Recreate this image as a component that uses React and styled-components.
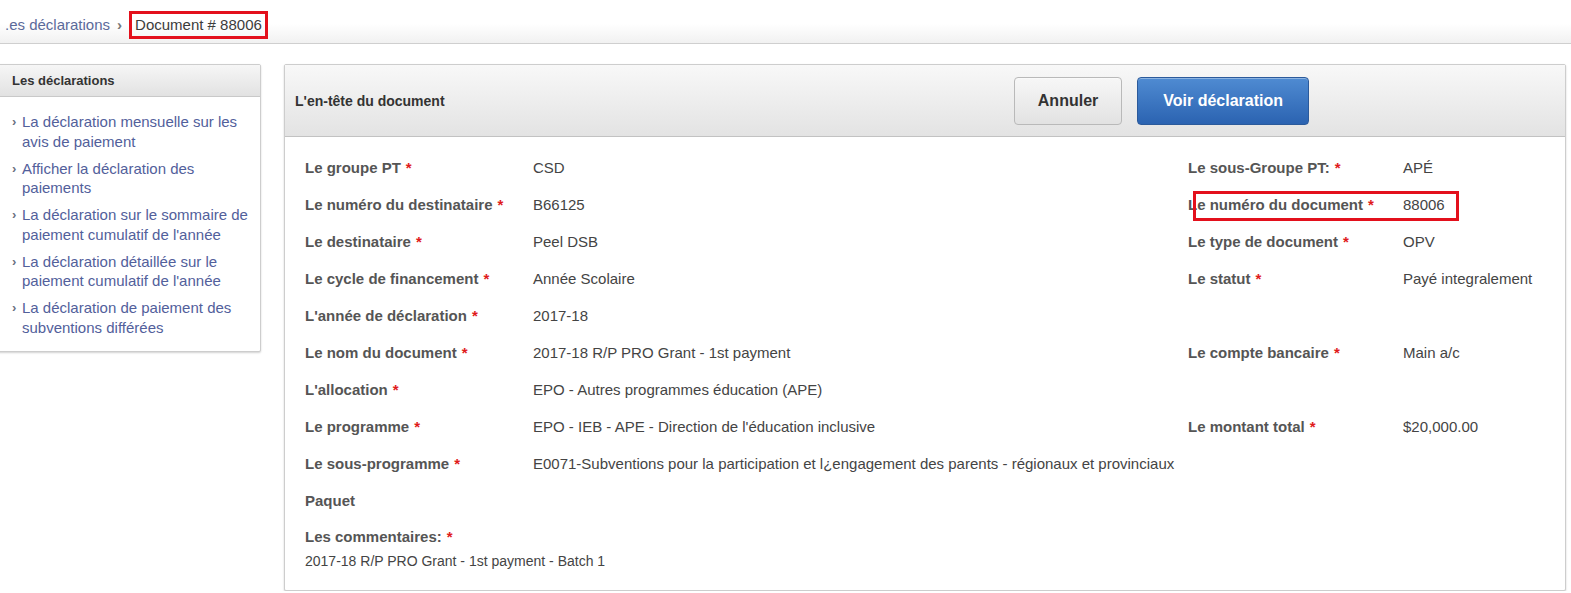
import React from "react";
import styled, { createGlobalStyle } from "styled-components";

const Global = createGlobalStyle`
  html, body { margin: 0; padding: 0; background: #fff; overflow: hidden; }
  body { font-family: "Liberation Sans", Arial, sans-serif; color: #444; }
`;

/* The screenshot shows the page scrolled a few pixels to the right,
   so the whole page is shifted left and its left edge is clipped. */
const Page = styled.div`
  margin-left: -10px;
  width: calc(100% + 10px);
`;

const Crumbs = styled.div`
  height: 44px;
  border-bottom: 1px solid #cfcfcf;
  background: linear-gradient(to bottom, #ffffff 55%, #f1f1f1 100%);
  display: flex;
  align-items: center;
  padding-left: 15px;
  padding-top: 6px;
  box-sizing: border-box;
  font-size: 15px;
  gap: 7px;
`;

const CrumbLink = styled.span`
  color: #5b6a9a;
`;

const CrumbSep = styled.span`
  color: #777;
  font-size: 15px;
  font-weight: bold;
`;

const CrumbCurrent = styled.span`
  color: #3c3c3c;
  border: 3px solid #e3101c;
  padding: 2px 3px;
  line-height: 18px;
`;

const Content = styled.div`
  display: flex;
  align-items: flex-start;
  gap: 23px;
  padding: 20px 5px 0 6px;
`;

const Side = styled.aside`
  width: 265px;
  flex: none;
  box-sizing: border-box;
  border: 1px solid #cdcdcd;
  border-radius: 2px;
  box-shadow: 0 1px 2px rgba(0, 0, 0, 0.18);
  background: #fff;
`;

const SideHead = styled.div`
  height: 31px;
  display: flex;
  align-items: center;
  padding-left: 15px;
  font-size: 13px;
  font-weight: bold;
  color: #333;
  border-bottom: 1px solid #c9c9c9;
  background: linear-gradient(to bottom, #f6f6f6, #e2e2e2);
`;

const SideList = styled.ul`
  list-style: none;
  margin: 0;
  padding: 15px 4px 14px 15px;
  display: flex;
  flex-direction: column;
  gap: 7.5px;
`;

const SideItem = styled.li`
  display: flex;
  font-size: 15px;
  line-height: 19.5px;
  color: #52609b;
`;

const Chevron = styled.span`
  width: 10px;
  flex: none;
  color: #6a6f80;
  font-weight: bold;
  font-size: 13px;
`;

const SideText = styled.span`
  width: 235px;
`;

const Panel = styled.section`
  flex: 1;
  min-width: 0;
  border: 1px solid #cdcdcd;
  border-radius: 2px;
  box-shadow: 0 1px 2px rgba(0, 0, 0, 0.2);
  background: #fff;
`;

const PanelHead = styled.div`
  height: 71px;
  display: grid;
  grid-template-columns: 1fr auto 256px;
  align-items: center;
  padding-left: 10px;
  border-bottom: 1px solid #c2c2c2;
  background: linear-gradient(to bottom, #f8f8f8, #e3e3e3);
`;

const PanelTitle = styled.h2`
  margin: 0;
  font-size: 14px;
  font-weight: bold;
  color: #333;
`;

const Actions = styled.div`
  display: flex;
  gap: 15px;
`;

const Button = styled.button`
  height: 48px;
  padding: 0 ${(p) => (p.$primary ? "25px" : "23px")};
  font-family: "Liberation Sans", Arial, sans-serif;
  font-size: 16px;
  font-weight: bold;
  border-radius: 4px;
  cursor: pointer;
  color: ${(p) => (p.$primary ? "#fff" : "#333")};
  border: 1px solid ${(p) => (p.$primary ? "#2b5a9b" : "#b9b9b9")};
  background: ${(p) =>
    p.$primary
      ? "linear-gradient(to bottom, #4f8bd2, #2b63b1)"
      : "linear-gradient(to bottom, #f7f7f7, #e2e2e2)"};
  box-shadow: inset 0 1px 0 rgba(255, 255, 255, 0.35);
`;

const PanelBody = styled.div`
  padding: 12px 10px 19px 20px;
`;

const Row = styled.div`
  display: grid;
  grid-template-columns: 228px 655px 215px 1fr;
  height: 37px;
  align-items: center;
  white-space: nowrap;
`;

const Pair = styled.div`
  grid-column: 3 / 5;
  display: grid;
  grid-template-columns: 215px 1fr;
  align-items: center;
  height: 100%;
  position: relative;
  ${(p) =>
    p.$marked &&
    `
    &::after {
      content: "";
      position: absolute;
      left: 5px;
      top: 5px;
      width: 266px;
      height: 30px;
      box-sizing: border-box;
      border: 3px solid #e3101c;
      pointer-events: none;
    }
  `}
`;

const Label = styled.span`
  font-size: 15px;
  font-weight: bold;
  color: #555;
`;

const Req = styled.span`
  color: #e01b1b;
  font-weight: bold;
  margin-left: 5px;
`;

const Value = styled.span`
  font-size: 15px;
  color: #444;
`;

const Comments = styled.div`
  padding-top: 8px;
  display: flex;
  flex-direction: column;
  gap: 6px;
`;

const CommentLabel = styled(Label)`
  line-height: 19px;
`;

const CommentText = styled.span`
  font-size: 14px;
  line-height: 19px;
  color: #444;
`;

const F = ({ label, req = true }) => (
  <Label>
    {label}
    {req && <Req>*</Req>}
  </Label>
);

const rows = [
  ["Le groupe PT", "CSD", "Le sous-Groupe PT:", "APÉ"],
  ["Le numéro du destinataire", "B66125", "Le numéro du document", "88006", true],
  ["Le destinataire", "Peel DSB", "Le type de document", "OPV"],
  ["Le cycle de financement", "Année Scolaire", "Le statut", "Payé integralement"],
  ["L'année de déclaration", "2017-18"],
  ["Le nom du document", "2017-18 R/P PRO Grant - 1st payment", "Le compte bancaire", "Main a/c"],
  ["L'allocation", "EPO - Autres programmes éducation (APE)"],
  ["Le programme", "EPO - IEB - APE - Direction de l'éducation inclusive", "Le montant total", "$20,000.00"],
  [
    "Le sous-programme",
    "E0071-Subventions pour la participation et l¿engagement des parents - régionaux et provinciaux",
  ],
];

const links = [
  "La déclaration mensuelle sur les avis de paiement",
  "Afficher la déclaration des paiements",
  "La déclaration sur le sommaire de paiement cumulatif de l'année",
  "La déclaration détaillée sur le paiement cumulatif de l'année",
  "La déclaration de paiement des subventions différées",
];

export default function App() {
  return (
    <Page>
      <Global />
      <Crumbs>
        <CrumbLink>.es déclarations</CrumbLink>
        <CrumbSep>›</CrumbSep>
        <CrumbCurrent>Document # 88006</CrumbCurrent>
      </Crumbs>
      <Content>
        <Side>
          <SideHead>Les déclarations</SideHead>
          <SideList>
            {links.map((l) => (
              <SideItem key={l}>
                <Chevron>›</Chevron>
                <SideText>{l}</SideText>
              </SideItem>
            ))}
          </SideList>
        </Side>
        <Panel>
          <PanelHead>
            <PanelTitle>L'en-tête du document</PanelTitle>
            <Actions>
              <Button>Annuler</Button>
              <Button $primary>Voir déclaration</Button>
            </Actions>
          </PanelHead>
          <PanelBody>
            {rows.map(([l1, v1, l2, v2, marked]) => (
              <Row key={l1}>
                <F label={l1} />
                <Value>{v1}</Value>
                {l2 && (
                  <Pair $marked={marked}>
                    <F label={l2} />
                    <Value>{v2}</Value>
                  </Pair>
                )}
              </Row>
            ))}
            <Row>
              <F label="Paquet" req={false} />
            </Row>
            <Comments>
              <CommentLabel>
                Les commentaires:<Req>*</Req>
              </CommentLabel>
              <CommentText>2017-18 R/P PRO Grant - 1st payment - Batch 1</CommentText>
            </Comments>
          </PanelBody>
        </Panel>
      </Content>
    </Page>
  );
}
